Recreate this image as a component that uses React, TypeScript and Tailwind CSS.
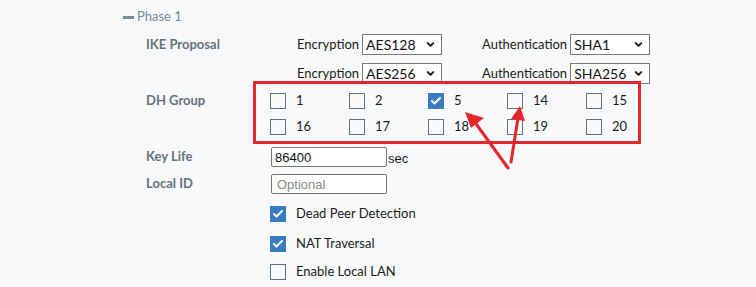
import { Check, ChevronDown } from 'lucide-react';

const dhGroups = [
  [
    { n: '1', on: false },
    { n: '2', on: false },
    { n: '5', on: true },
    { n: '14', on: false },
    { n: '15', on: false },
  ],
  [
    { n: '16', on: false },
    { n: '17', on: false },
    { n: '18', on: false },
    { n: '19', on: false },
    { n: '20', on: false },
  ],
];

function Box({ on }: { on: boolean }) {
  return on ? (
    <span className="flex h-4 w-4 shrink-0 items-center justify-center bg-[#3a7cbf]">
      <Check className="h-3 w-3 text-white" strokeWidth={4} />
    </span>
  ) : (
    <span className="h-4 w-4 shrink-0 border border-[#5d7483] bg-[#f8f9fb]" />
  );
}

function Select({ value, w }: { value: string; w: string }) {
  return (
    <div className={`flex h-[21px] ${w} items-center justify-between border border-[#7a7a7a] bg-white pl-[3px] pr-[5px] text-[14px] text-[#111]`}>
      <span>{value}</span>
      <ChevronDown className="h-[11px] w-[11px] text-[#222]" strokeWidth={4.5} />
    </div>
  );
}

function Pair({ label, value }: { label: string; value: string }) {
  return (
    <div className="flex items-center gap-[3px]">
      <span>{label}</span>
      <Select value={value} w="w-[80px]" />
    </div>
  );
}

export default function App() {
  return (
    <div className="relative h-[287px] w-[756px] overflow-hidden bg-[#f8f9fb] text-[13px] text-[#1b1b1b] [font-family:Lato,'Liberation_Sans',sans-serif]">
      <div className="flex flex-col pl-[123px] pt-[4px]">
        {/* Phase header */}
        <div className="flex h-[26px] items-center gap-[3px] text-[#7b8a96]">
          <span className="h-[3px] w-[11px] bg-[#7b8a96]" />
          <span>Phase 1</span>
        </div>

        <div className="flex pl-[23px]">
          {/* labels */}
          <div className="flex w-[125px] shrink-0 flex-col font-bold text-[#65737f]">
            <div className="mt-[4px] flex h-[21px] items-center">IKE Proposal</div>
            <div className="mt-[38px] flex h-[16px] items-center">DH Group</div>
            <div className="mt-[38px] flex h-[20px] items-center">Key Life</div>
            <div className="mt-[7px] flex h-[20px] items-center">Local ID</div>
          </div>

          {/* fields */}
          <div className="flex flex-col">
            <div className="mt-[4px] flex h-[21px] items-center pl-[26px]">
              <Pair label="Encryption" value="AES128" />
              <div className="ml-[40px]">
                <Pair label="Authentication" value="SHA1" />
              </div>
            </div>
            <div className="mt-[8px] flex h-[21px] items-center pl-[26px]">
              <Pair label="Encryption" value="AES256" />
              <div className="ml-[40px]">
                <Pair label="Authentication" value="SHA256" />
              </div>
            </div>

            <div className="-ml-px mt-[9px] flex flex-col gap-[10px]">
              {dhGroups.map((row, i) => (
                <div key={i} className="flex h-4">
                  {row.map((g) => (
                    <div key={g.n} className="flex w-[79px] items-center gap-[10px]">
                      <Box on={g.on} />
                      <span>{g.n}</span>
                    </div>
                  ))}
                </div>
              ))}
            </div>

            <div className="mt-[12px] flex h-[20px] items-end [font-family:'Liberation_Sans',Arial,sans-serif]">
              <input
                readOnly
                value="86400"
                className="h-[20px] w-[116px] rounded-[2px] border border-[#767676] bg-white px-[3px] text-[13px] text-[#111] outline-none"
              />
              <span className="ml-px text-[13px] leading-[16px]">sec</span>
            </div>
            <div className="mt-[7px] flex h-[20px] [font-family:'Liberation_Sans',Arial,sans-serif]">
              <input
                readOnly
                placeholder="Optional"
                className="h-[20px] w-[116px] rounded-[2px] border border-[#767676] bg-white px-[5px] text-[13px] text-[#111] outline-none placeholder:text-[#8a8a8a]"
              />
            </div>

            <div className="-ml-px mt-[12px] flex h-4 items-center gap-[10px]">
              <Box on />
              <span>Dead Peer Detection</span>
            </div>
            <div className="-ml-px mt-[14px] flex h-4 items-center gap-[10px]">
              <Box on />
              <span>NAT Traversal</span>
            </div>
            <div className="-ml-px mt-[12px] flex h-4 items-center gap-[10px]">
              <Box on={false} />
              <span>Enable Local LAN</span>
            </div>
          </div>
        </div>
      </div>

      {/* annotation overlay */}
      <div className="pointer-events-none absolute left-[253px] top-[81px] h-[63px] w-[388px] border-[3px] border-[#e5262b]" />
      <svg className="pointer-events-none absolute left-0 top-0" width="756" height="287">
        <g stroke="#e5262b" strokeWidth="3" fill="#e5262b" strokeLinecap="round">
          <line x1="508" y1="168" x2="474" y2="121" />
          <polygon points="465,112 484,118 471,128" stroke="none" />
          <line x1="511" y1="162" x2="518" y2="118" />
          <polygon points="520,106 525,121 511,119" stroke="none" />
        </g>
      </svg>
    </div>
  );
}
